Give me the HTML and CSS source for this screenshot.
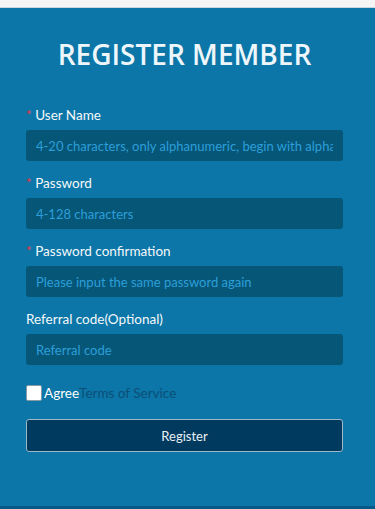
FILE: index.html
```html
<!DOCTYPE html>
<html lang="en">
<head>
  <meta charset="UTF-8" />
  <meta name="viewport" content="width=device-width, initial-scale=1.0"/>
  <title>Register Member</title>
  <link rel="stylesheet" href="styles.css">
</head>
<body>

  <div class="topbar"></div>

  <!-- Register form -->
  <section class="register">
    <h1 class="title">REGISTER MEMBER</h1>

    <form class="form">
      <div class="field">
        <label class="label"><span class="req">*</span> User Name</label>
        <input class="input" type="text" placeholder="4-20 characters, only alphanumeric, begin with alphabet">
      </div>

      <div class="field">
        <label class="label"><span class="req">*</span> Password</label>
        <input class="input" type="password" placeholder="4-128 characters">
      </div>

      <div class="field">
        <label class="label"><span class="req">*</span> Password confirmation</label>
        <input class="input" type="password" placeholder="Please input the same password again">
      </div>

      <div class="field">
        <label class="label">Referral code(Optional)</label>
        <input class="input" type="text" placeholder="Referral code">
      </div>

      <div class="agree">
        <span class="box"></span>
        <span class="agree-text">Agree</span><a class="terms" href="#">Terms of Service</a>
      </div>

      <button class="btn" type="button">Register</button>
    </form>
  </section>

  <div class="bottombar"></div>

</body>
</html>
```

FILE: styles.css
```css
body {
  margin: 0;
  padding: 0;
  background: #0b76a7;
  font-family: 'Lato', sans-serif;
  color: #fff;
  height: 509px;
  display: flex;
  flex-direction: column;
  overflow: hidden;
}

.topbar {
  height: 7px;
  background: #f5f5f5;
  border-bottom: 1px solid #c9d6dd;
}

.register {
  flex: 1;
  padding: 0 32px 0 26px;
}

.title {
  margin: 30px 0 35px;
  text-align: center;
  font-family: 'Open Sans', sans-serif;
  font-size: 28px;
  font-weight: 600;
  line-height: 32px;
  color: #eef6fb;
}

.field {
  margin-bottom: 12px;
}

.label {
  display: block;
  font-size: 13.5px;
  line-height: 20px;
  margin-bottom: 5px;
  color: #f4f8fb;
}

.req {
  color: #e2384a;
}

.input {
  display: block;
  box-sizing: border-box;
  width: 100%;
  height: 31px;
  padding: 0 10px;
  border: none;
  border-radius: 3px;
  background: #065678;
  font-family: 'Lato', sans-serif;
  font-size: 13px;
  color: #fff;
  outline: none;
}

.input::placeholder {
  color: #2c9fd8;
}

.agree {
  display: flex;
  align-items: center;
  margin-top: 18px;
  font-size: 13.5px;
  line-height: 20px;
}

.box {
  width: 14px;
  height: 14px;
  background: #fff;
  border: 1px solid #8a9aa5;
  border-radius: 2px;
  margin-right: 2px;
}

.agree-text {
  color: #fff;
}

.terms {
  color: #0b4f77;
  text-decoration: none;
}

.btn {
  display: block;
  width: 100%;
  height: 33px;
  margin-top: 16px;
  background: #003a5e;
  border: 1px solid #9fb7c6;
  border-radius: 3px;
  color: #e8f0f5;
  font-family: 'Lato', sans-serif;
  font-size: 13px;
}

.bottombar {
  height: 3px;
  background: #075a86;
}
```
